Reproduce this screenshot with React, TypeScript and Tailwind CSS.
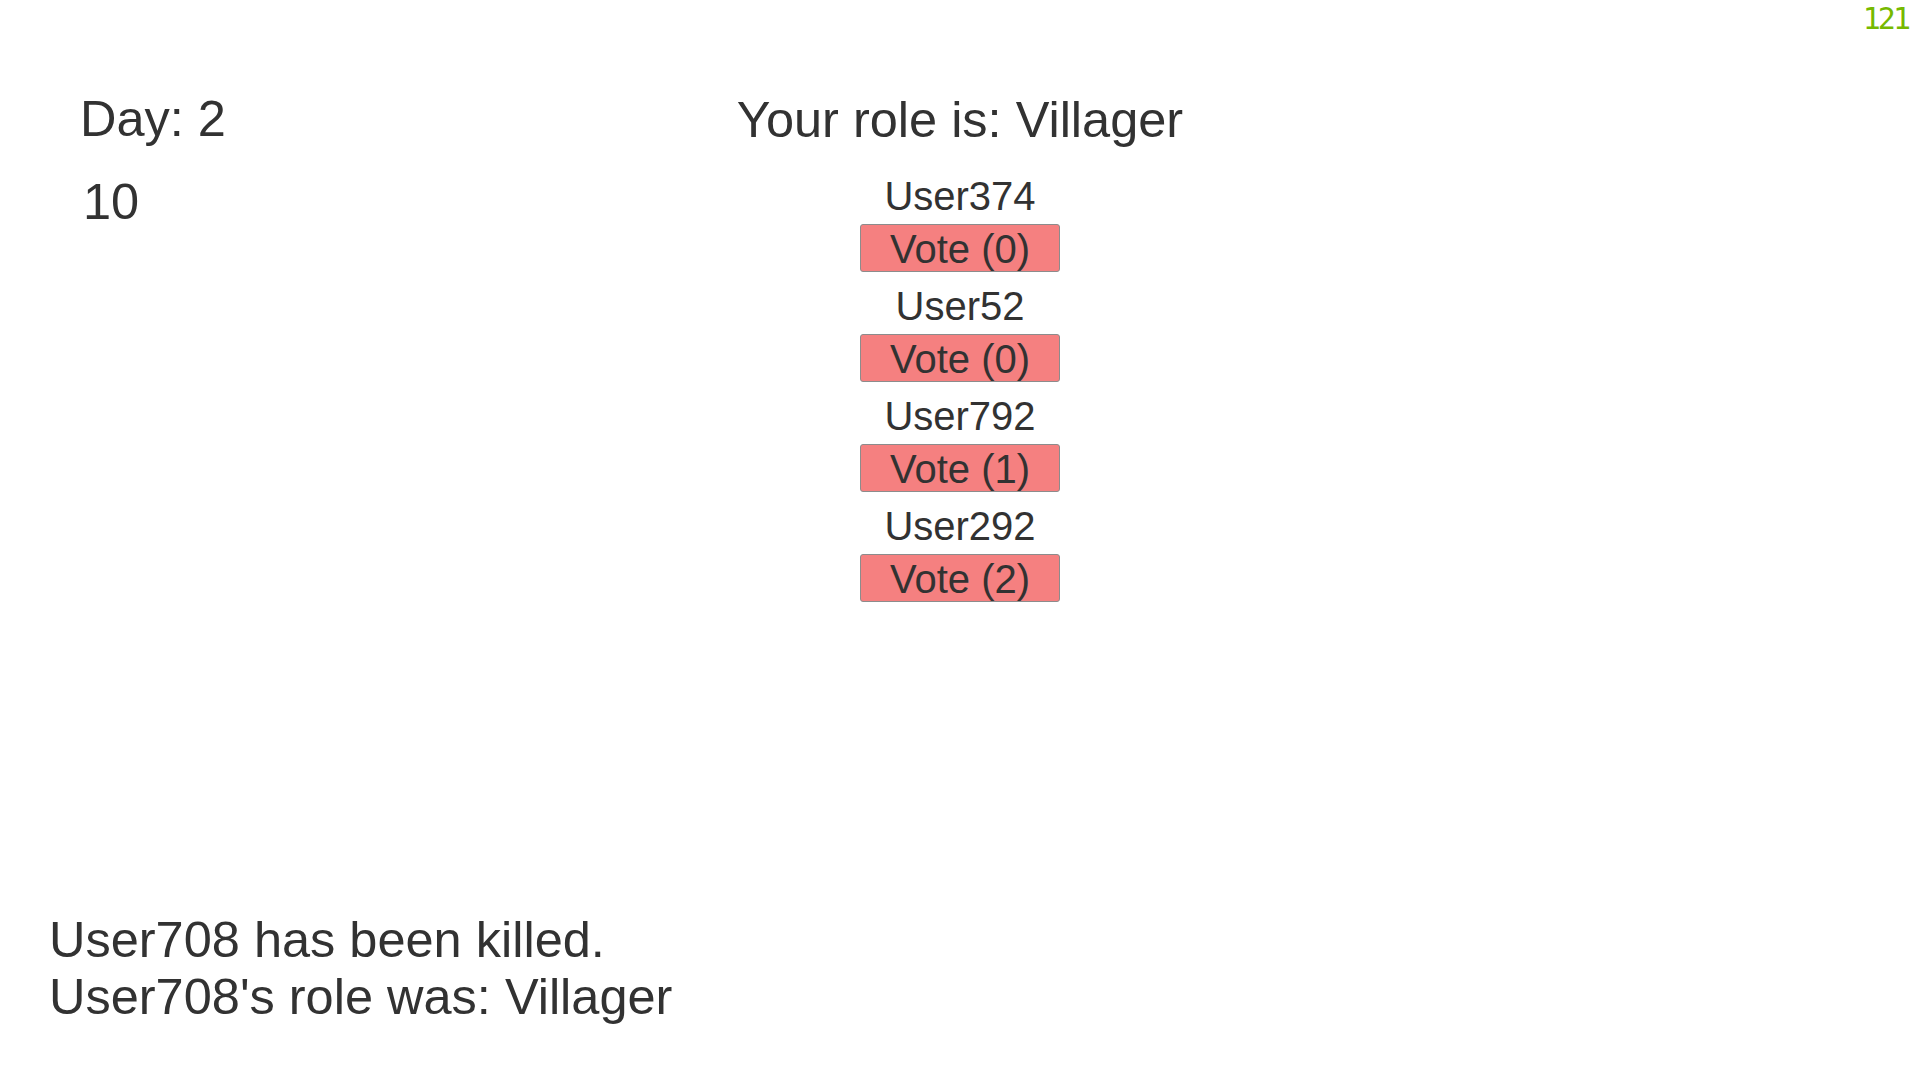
import React from 'react';

const PLAYERS = [
  { name: 'User374', votes: 0 },
  { name: 'User52', votes: 0 },
  { name: 'User792', votes: 1 },
  { name: 'User292', votes: 2 },
];

const PlayerRow: React.FC<{ name: string; votes: number }> = ({ name, votes }) => (
  <div className="flex flex-col items-center pb-[8px]">
    <div className="text-[40px] leading-[52px]">{name}</div>
    <button className="mt-[2px] flex h-[48px] w-[200px] items-center justify-center rounded-[3px] border border-[#8c8c8c] bg-[#f58080] pt-[2px] text-[40px] leading-none text-[#323232]">
      Vote ({votes})
    </button>
  </div>
);

export default function App() {
  return (
    <div
      className="relative flex h-screen w-full flex-col bg-white text-[#323232]"
      style={{ fontFamily: '"Liberation Sans", Arial, sans-serif' }}
    >
      <div className="absolute right-[12px] top-[4px] text-[30px] leading-none tracking-[-3px] text-[#76b900]" style={{ fontFamily: '"DejaVu Sans Mono", monospace' }}>
        121
      </div>

      <div className="grid grid-cols-3 pt-[91px]">
        <div className="flex flex-col pl-[80px]">
          <div className="-mt-[1px] text-[50.5px] leading-[57px]">Day: 2</div>
          <div className="mt-[26px] pl-[3px] text-[50.5px] leading-[57px]">10</div>
        </div>

        <div className="flex flex-col items-center">
          <div className="whitespace-nowrap text-[50.5px] leading-[57px]">Your role is: Villager</div>
          <div className="mt-[22px] flex flex-col">
            {PLAYERS.map((p) => (
              <PlayerRow key={p.name} name={p.name} votes={p.votes} />
            ))}
          </div>
        </div>

        <div />
      </div>

      <div className="mt-auto pb-[55px] pl-[49px] text-[50.5px] leading-[57px]">
        <div>User708 has been killed.</div>
        <div>User708's role was: Villager</div>
      </div>
    </div>
  );
}
